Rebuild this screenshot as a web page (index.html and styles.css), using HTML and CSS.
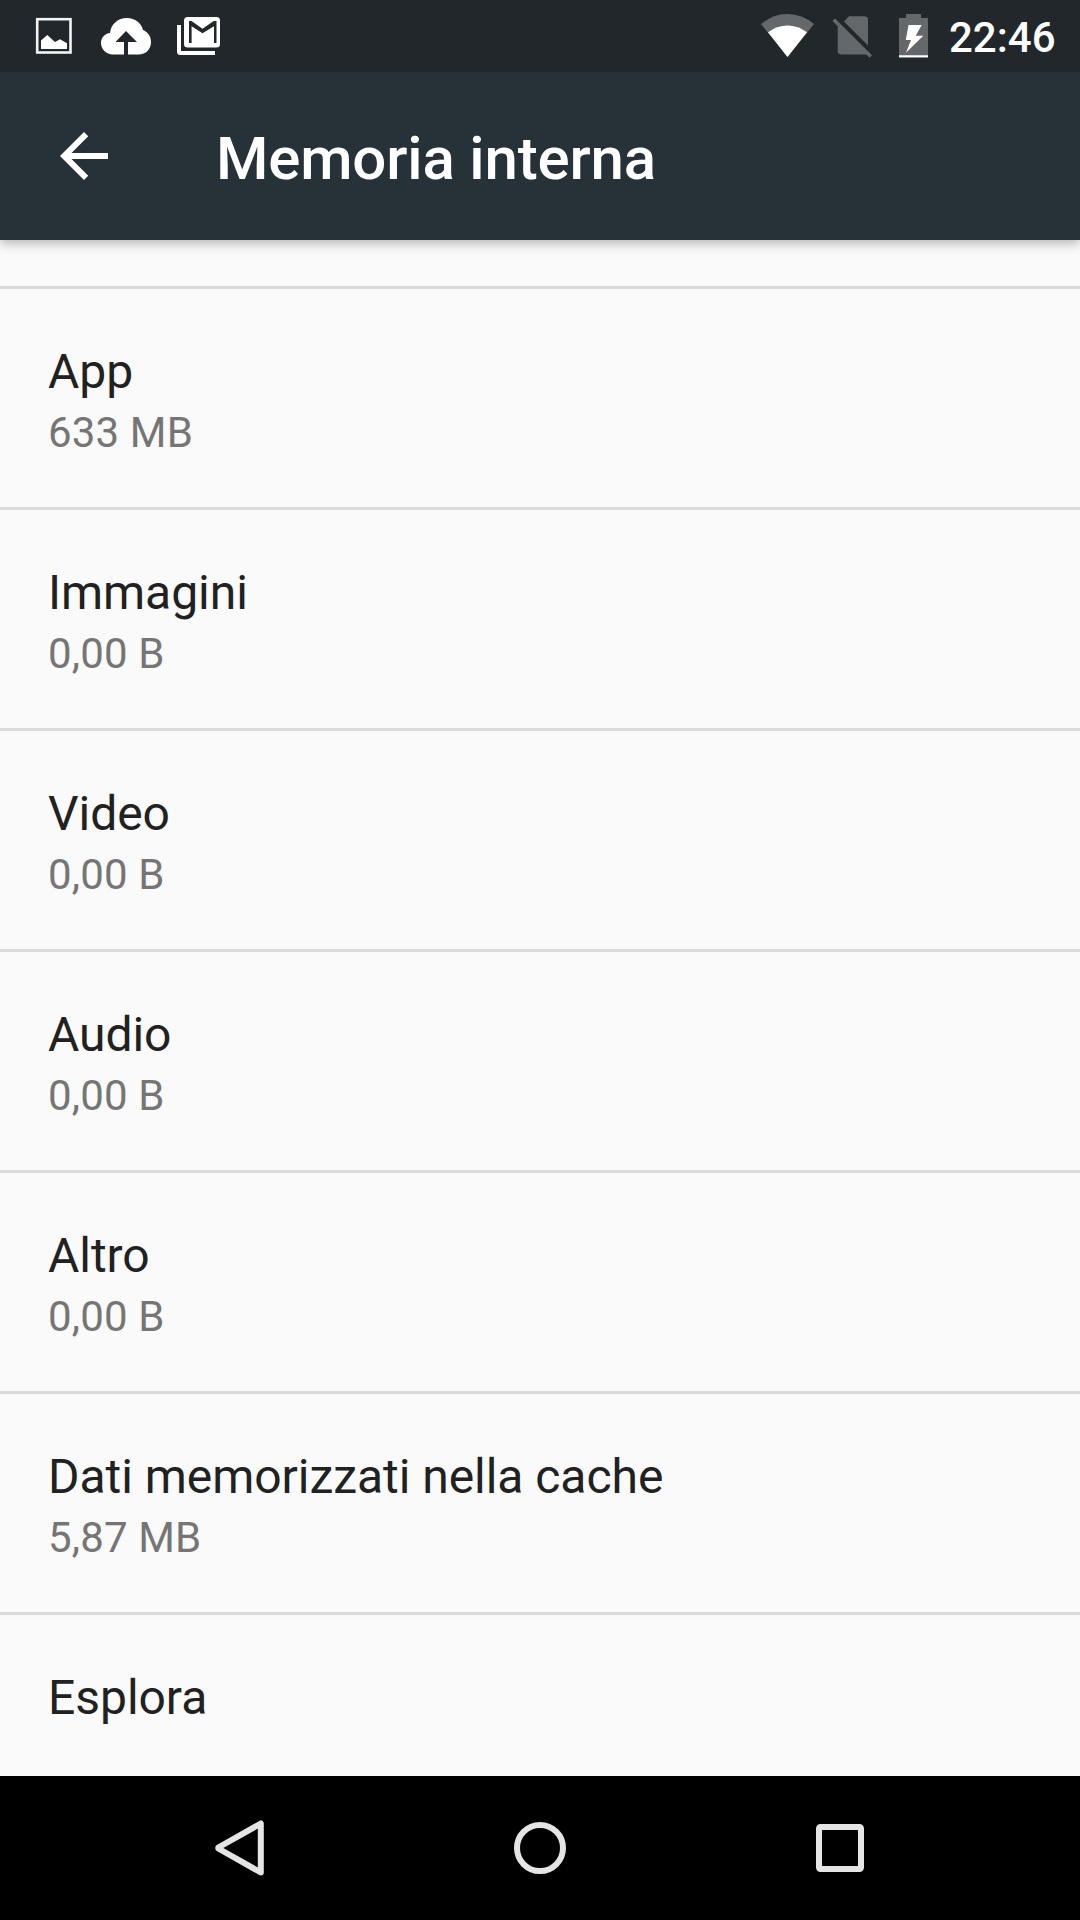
FILE: index.html
```html
<!DOCTYPE html>
<html lang="it">
<head>
<meta charset="utf-8">
<title>Memoria interna</title>
<link rel="stylesheet" href="styles.css">
</head>
<body>
<header class="status">
  <svg class="notifications" width="740" height="72" viewBox="0 0 740 72">
    <rect x="37.200" y="19.200" width="33.300" height="33.300" fill="none" stroke="#f4f4f4" stroke-width="2.600"/>
    <path fill="#fff" d="M41 49V40.500l6.300-5.500 7.700 7 5-2.800 7 4V49z"/>
    <path fill="#fff" d="M113 54.500C106 54.500 101 49 101 43c0-5.500 4-9.500 9-10 1-9 8-15 17-15 8 0 14.500 5 16 12 5 2 8 6.500 8 12 0 7-5 12.500-12.500 12.500H128V42h9L126 31l-10.500 11h8.500v12.500z"/>
    <rect x="184" y="17" width="36" height="30.500" rx="3.500" fill="#fff"/>
    <path fill="#21272b" d="M189 43V21h2.500l11 7.700 11.200-7.700h2.800v22h-2.500V26.300l-11.500 7-10.900-7V43z"/>
    <path fill="#fff" d="M177 25h4v26h34v4h-34.500a3.500 3.500 0 0 1-3.500-3.500z"/>
  </svg>
  <svg class="indicators" width="200" height="72" viewBox="740 0 200 72">
    <path fill="#64686b" d="M761 24Q773 14 787.500 14T814 24L787.500 57z"/>
    <path fill="#fff" d="M768 32.300q9-6.800 19.500-6.800t19.500 6.800L787.500 57z"/>
    <path fill="#64686b" d="M844 21.500l5-5.200h15.500a3.500 3.500 0 0 1 3.500 3.500V45.500zM835 18.500l37 36.700-2.400 2.500-3.300-3.300H841a3.300 3.300 0 0 1-3.300-3.300V26.300L832.500 21z"/>
    <path fill="#64686b" d="M906 14h15v4h7v40h-29V18h7z"/>
    <path fill="#fff" d="M899 55.300h29v2h-29zM908.500 25h13.200l-6 10.700h7.600L906 52.700l5-12.700h-5.200z"/>
  </svg>
  <span class="clock">22:46</span>
</header>
<div class="toolbar">
  <svg class="back" width="48" height="48" viewBox="0 0 16 16"><path d="M16 7H3.830l5.590-5.590L8 0 0 8l8 8 1.410-1.410L3.830 9H16z" fill="#fff"/></svg>
  <h1>Memoria interna</h1>
</div>
<main class="list">
  <div class="item"><div class="title">App</div><div class="value">633 MB</div></div>
  <div class="item"><div class="title">Immagini</div><div class="value">0,00 B</div></div>
  <div class="item"><div class="title">Video</div><div class="value">0,00 B</div></div>
  <div class="item"><div class="title">Audio</div><div class="value">0,00 B</div></div>
  <div class="item"><div class="title">Altro</div><div class="value">0,00 B</div></div>
  <div class="item"><div class="title">Dati memorizzati nella cache</div><div class="value">5,87 MB</div></div>
  <div class="item"><div class="title">Esplora</div></div>
</main>
<nav class="nav">
  <svg width="60" height="60" viewBox="0 0 60 60"><path d="M50.800 5.500v49L8.300 30.500v-1z"/></svg>
  <svg width="60" height="60" viewBox="0 0 60 60"><circle cx="30" cy="30" r="23"/></svg>
  <svg width="60" height="60" viewBox="0 0 60 60"><rect x="9" y="9" width="42" height="42" rx="1.500"/></svg>
</nav>
</body>
</html>
```

FILE: styles.css
```css
* { box-sizing: border-box; }
body { margin: 0; width: 1080px; height: 1920px; display: flex; flex-direction: column; overflow: hidden; background: #fafafa; font-family: Roboto, sans-serif; }
svg { display: block; flex: none; }
.status { height: 72px; flex: none; background: #21272b; display: flex; position: relative; z-index: 1; }
.clock { margin-left: auto; padding-right: 24.5px; color: #fff; font-size: 42px; line-height: 75px; font-weight: 500; }
.toolbar { height: 168px; flex: none; background: #263238; display: flex; align-items: center; padding-left: 60px; color: #fff; box-shadow: 0 4px 10px rgba(0,0,0,.26); }
h1 { margin: 4px 0 0 108px; font-size: 60px; font-weight: 500; letter-spacing: -0.17px; }
.list { flex: 1; padding-top: 46px; overflow: hidden; }
.item { height: 221px; border-top: 3px solid #dadada; padding: 53px 48px 0; }
.title { font-size: 48px; line-height: 60px; color: #212121; letter-spacing: -0.04px; }
.value { margin-top: 1px; font-size: 42px; line-height: 60px; color: #757575; letter-spacing: 0.15px; }
.nav { height: 144px; flex: none; background: #000; display: flex; justify-content: center; align-items: center; gap: 240px; }
.nav svg { fill: none; stroke: #e5e5e5; stroke-width: 6; stroke-linejoin: round; }
```
